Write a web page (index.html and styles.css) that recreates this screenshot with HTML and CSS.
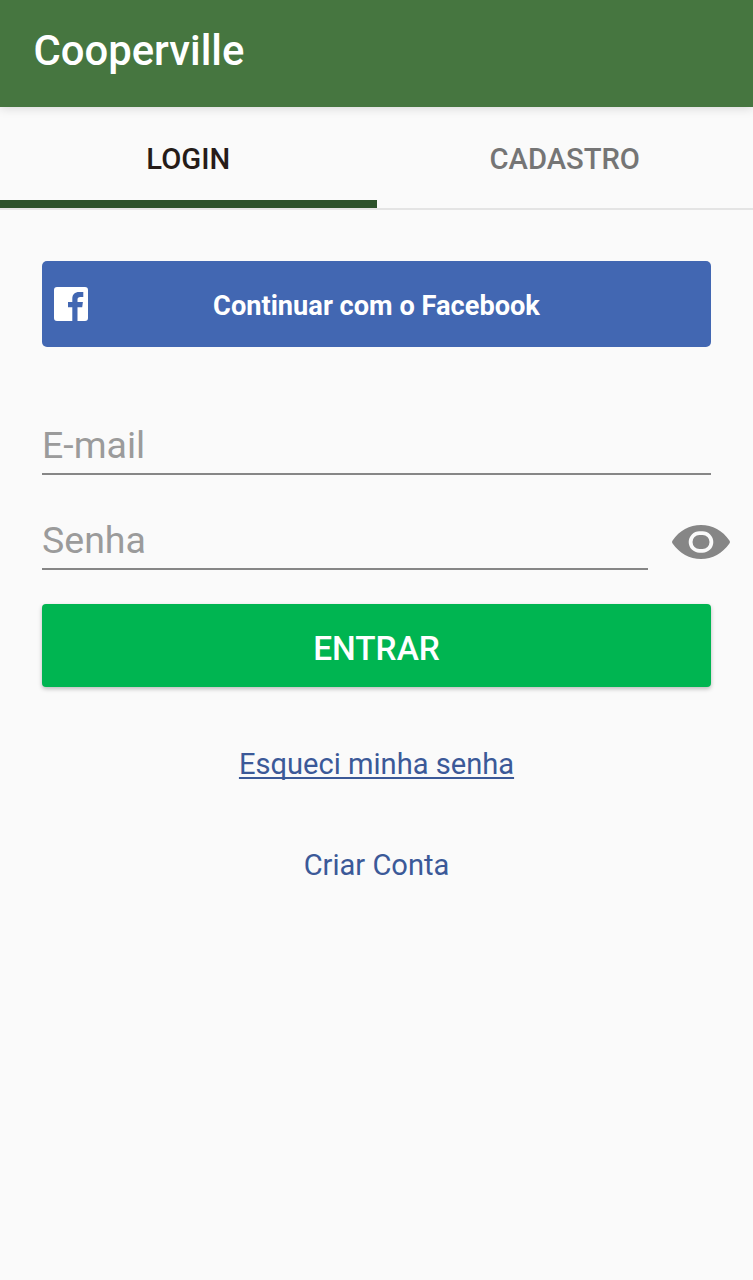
FILE: index.html
```html
<!DOCTYPE html>
<html lang="pt-BR">
<head>
    <meta charset="UTF-8">
    <meta name="viewport" content="width=device-width, initial-scale=1.0">
    <title>Cooperville</title>
    <link rel="stylesheet" href="styles.css">
</head>
<body>
    <header class="topbar">
        <h1>Cooperville</h1>
    </header>

    <nav class="tabs">
        <a class="tab active" href="#login">LOGIN</a>
        <a class="tab" href="#cadastro">CADASTRO</a>
    </nav>

    <form class="login">
        <button type="button" class="btn-facebook">
            <svg class="fb-icon" viewBox="0 0 34 34">
                <path fill="#fff" d="M3 0h28a3 3 0 0 1 3 3v28a3 3 0 0 1-3 3h-7.500V20.200h4.700l.7-5.200h-5.400v-2.500c0-1.600.8-2.500 2.800-2.500h3V5.100c-.5-.1-2.300-.2-4.200-.2-4.200 0-6.800 2.300-6.800 6.700V15h-4.300v5.200h4.300V34H3a3 3 0 0 1-3-3V3a3 3 0 0 1 3-3z"/>
            </svg>
            <span>Continuar com o Facebook</span>
        </button>

        <input type="email" class="field" placeholder="E-mail">

        <div class="password-row">
            <input type="password" class="field" placeholder="Senha">
            <svg class="eye" viewBox="0 0 58 34">
                <path fill="#868686" d="M.6 15.400C7.500 5.500 17.500 0 29 0s21.500 5.500 28.400 15.400q1.100 1.600 0 3.200C50.500 28.500 40.500 34 29 34S7.500 28.500.6 18.600q-1.100-1.600 0-3.200z"/>
                <rect x="18.600" y="8.200" width="20.800" height="17.600" rx="8.800" fill="#868686" stroke="#fafafa" stroke-width="3.800"/>
            </svg>
        </div>

        <button type="button" class="btn-entrar">ENTRAR</button>

        <a class="link forgot" href="#senha">Esqueci minha senha</a>
        <a class="link" href="#conta">Criar Conta</a>
    </form>
</body>
</html>
```
FILE: styles.css
```css
body {
    font-family: Roboto, sans-serif;
    background-color: #fafafa;
    margin: 0;
    min-height: 100vh;
}
.topbar {
    height: 107px;
    background-color: #467640;
    box-shadow: 0 1px 10px rgba(0, 0, 0, 0.15);
}
h1 {
    margin: 0;
    padding-left: 33.5px;
    color: white;
    font-size: 41.8px;
    font-weight: 500;
    line-height: 101px;
}
.tabs {
    display: flex;
    height: 101px;
    border-bottom: 2px solid #e4e4e4;
}
.tab {
    flex: 1;
    box-sizing: border-box;
    color: #757575;
    font-size: 29.2px;
    font-weight: 500;
    line-height: 104px;
    text-align: center;
    text-decoration: none;
}
.tab.active {
    color: #261c18;
    border-bottom: 8px solid #2d522b; /* Verde escuro */
}
.login {
    display: flex;
    flex-direction: column;
    padding: 51px 42px 0;
}
button {
    border: none;
    padding: 0;
    color: white;
    font-family: inherit;
    cursor: pointer;
}
.btn-facebook {
    display: flex;
    align-items: center;
    height: 86px;
    padding: 3px 12px 0;
    background-color: #4267b2;
    border-radius: 5px;
    font-size: 27.2px;
    font-weight: 700;
}
.btn-facebook span {
    flex: 1;
    padding-right: 34px;
    text-align: center;
}
.fb-icon {
    width: 34px;
    height: 34px;
    margin-top: -3px;
}
.field {
    box-sizing: border-box;
    width: 100%;
    height: 62px;
    margin: 66px 0 0;
    padding: 4px 0 0;
    background: none;
    border: none;
    border-bottom: 2px solid #868686;
    border-radius: 0;
    font-family: inherit;
    font-size: 37.5px;
    outline: none;
}
.field::placeholder {
    color: #9b9b9b;
    opacity: 1;
}
.password-row {
    display: flex;
    align-items: center;
    margin: 33px -19px 0 0;
}
.password-row .field {
    flex: 1;
    margin: 0;
}
.eye {
    width: 58px;
    height: 34px;
    margin: 6px 0 0 24px;
}
.btn-entrar {
    height: 83px;
    margin-top: 34px;
    padding-top: 6px;
    background-color: #00b551;
    border-radius: 4px;
    box-shadow: 0 2px 4px rgba(0, 0, 0, 0.25);
    font-size: 33.4px;
    font-weight: 500;
}
.link {
    align-self: center;
    color: #3b5998;
    font-size: 29.1px;
    line-height: 40px;
    text-decoration: none;
}
.forgot {
    margin: 57px 0 61px;
    text-decoration: underline;
    text-decoration-thickness: 1.5px;
    text-underline-offset: 3px;
    text-decoration-skip-ink: none;
}
```
